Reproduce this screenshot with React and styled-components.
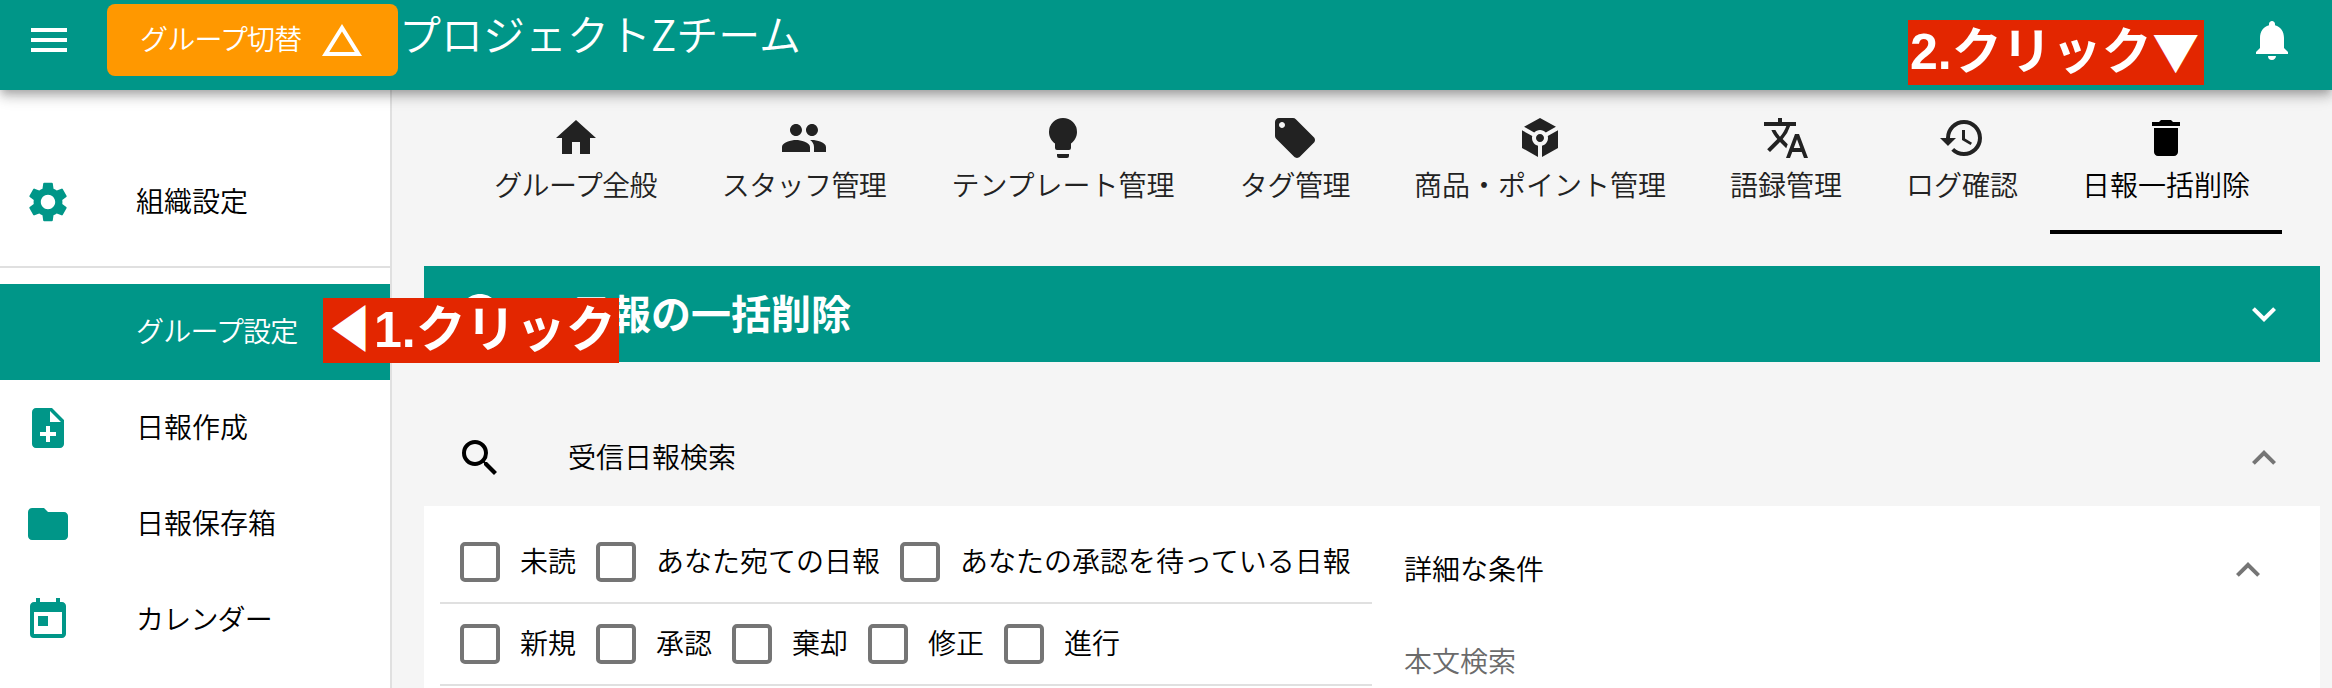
import React from "react";
import styled, { createGlobalStyle } from "styled-components";
import {
  MdMenu,
  MdChangeHistory,
  MdNotifications,
  MdSettings,
  MdNoteAdd,
  MdFolder,
  MdToday,
  MdHome,
  MdToken,
  MdTranslate,
  MdHistory,
  MdDelete,
  MdSearch,
  MdInfo,
  MdExpandLess,
  MdExpandMore,
} from "react-icons/md";

const teal = "#009688";

const GlobalStyle = createGlobalStyle`
  * { box-sizing: border-box; }
  body {
    margin: 0;
    overflow: hidden;
    background: #f5f5f5;
    color: #000;
    font-family: "Noto Sans CJK JP", sans-serif;
    font-size: 28px;
    font-weight: 350;
  }
  svg { display: block; flex: none; }
`;

const Page = styled.div`
  position: relative;
  display: flex;
  flex-direction: column;
  height: 688px;
  overflow: hidden;
`;

const AppBar = styled.header`
  position: relative;
  z-index: 2;
  display: flex;
  align-items: flex-start;
  flex: none;
  height: 90px;
  padding: 0 36px 0 25px;
  background: ${teal};
  color: #fff;
  box-shadow: 0 4px 8px -2px rgba(0, 0, 0, 0.2), 0 8px 10px 0 rgba(0, 0, 0, 0.14),
    0 2px 20px 0 rgba(0, 0, 0, 0.12);
`;

const IconButton = styled.span`
  display: flex;
  margin-top: 16px;
`;

const Label = styled.span`
  padding-bottom: 5px;
  letter-spacing: ${(p) => p.$spacing || 0};
  white-space: nowrap;
`;

const GroupButton = styled.button`
  display: flex;
  align-items: center;
  justify-content: space-between;
  width: 291px;
  height: 72px;
  margin: 4px 0 0 34px;
  padding: 0 32px 0 33px;
  border: 0;
  border-radius: 8px;
  background: #ff9800;
  color: #fff;
  font: inherit;
`;

const Title = styled.h1`
  flex: 1;
  margin: 0 0 0 1px;
  font-size: 42px;
  font-weight: 350;
  line-height: 65px;
`;

const Body = styled.div`
  display: flex;
  flex: 1;
  min-height: 0;
`;

const Sidebar = styled.nav`
  flex: none;
  width: 392px;
  padding-top: 64px;
  border-right: 2px solid #e0e0e0;
  background: #fff;
`;

const NavItem = styled.a`
  display: flex;
  align-items: center;
  height: 96px;
  padding-left: 24px;
  background: ${(p) => (p.$active ? teal : "transparent")};
  color: ${(p) => (p.$active ? "#fff" : "#000")};
`;

const NavIcon = styled.span`
  width: 112px;
  color: ${teal};
`;

const NavDivider = styled.hr`
  height: 2px;
  margin: 16px 0;
  border: 0;
  background: #e0e0e0;
`;

const Main = styled.main`
  flex: 1;
  min-width: 0;
  padding: 0 12px 0 32px;
`;

const Tabs = styled.div`
  display: flex;
  justify-content: center;
  height: 144px;
  margin-bottom: 32px;
  padding-right: 1px;
`;

const Tab = styled.div`
  display: flex;
  flex-direction: column;
  align-items: center;
  width: ${(p) => p.$width}px;
  padding-top: 24px;
  border-bottom: 4px solid ${(p) => (p.$active ? "#000" : "transparent")};
  color: ${(p) => (p.$active ? "#000" : "#222")};
`;

const TabLabel = styled(Label)`
  line-height: 44px;
`;

const PanelHeader = styled.div`
  display: flex;
  align-items: center;
  height: 96px;
  padding: 0 32px;
  background: ${(p) => (p.$filled ? teal : "transparent")};
  color: ${(p) => (p.$filled ? "#fff" : "#000")};
`;

const PanelTitle = styled.h2`
  flex: 1;
  margin: 0;
  padding: 0 0 5px ${(p) => (p.$large ? 67 : 64)}px;
  font-size: ${(p) => (p.$large ? 40 : 28)}px;
  font-weight: ${(p) => (p.$large ? 700 : 350)};
`;

const Chevron = styled.span`
  color: ${(p) => (p.$light ? "#fff" : "#757575")};
`;

const SearchSection = styled.section`
  margin-top: 48px;
`;

const SearchCard = styled.div`
  display: grid;
  grid-template-columns: 932px 932px;
  height: 300px;
  padding: 16px;
  background: #fff;
`;

const CheckRow = styled.div`
  display: flex;
  align-items: center;
  gap: 20px;
  height: 82px;
  padding-left: 20px;
  border-bottom: 2px solid #e0e0e0;
`;

const CheckLabel = styled.label`
  display: flex;
  align-items: center;
  gap: 20px;
`;

const CheckBox = styled.span`
  width: 40px;
  height: 40px;
  border: 4px solid #757575;
  border-radius: 5px;
`;

const Conditions = styled.div`
  padding: 0 32px;
`;

const ConditionsHeader = styled.div`
  display: flex;
  align-items: center;
  justify-content: space-between;
  height: 96px;
`;

const TextField = styled.div`
  display: flex;
  align-items: center;
  height: 88px;
  color: #6b6b6b;
`;

const Callout = styled.div`
  position: absolute;
  z-index: 3;
  left: ${(p) => p.$left}px;
  top: ${(p) => p.$top}px;
  display: flex;
  width: 296px;
  height: 65px;
  padding-left: 2px;
  background: #e32600;
  color: #fff;
  font-family: "Liberation Sans", "Noto Sans CJK JP", sans-serif;
  font-size: 50px;
  font-weight: 700;
  line-height: 65px;
  white-space: nowrap;
`;

const LeftArrow = styled.span`
  width: 49px;
  text-align: center;
  transform: scaleX(0.82);
`;

const DownArrow = styled.span`
  width: 48px;
  font-family: "Noto Sans CJK JP", sans-serif;
  font-size: 47px;
  line-height: 59px;
  text-align: center;
`;

const PeopleIcon = () => (
  <svg width="48" height="48" viewBox="0 0 24 24" fill="currentColor">
    <path d="M16 11c1.66 0 2.99-1.34 2.99-3S17.66 5 16 5c-1.66 0-3 1.34-3 3s1.34 3 3 3zm-8 0c1.66 0 2.99-1.34 2.99-3S9.66 5 8 5C6.34 5 5 6.34 5 8s1.34 3 3 3zm0 2c-2.33 0-7 1.17-7 3.5V19h14v-2.5c0-2.33-4.67-3.5-7-3.5zm8 0c-.29 0-.62.02-.97.05 1.16.84 1.97 1.97 1.97 3.45V19h6v-2.5c0-2.33-4.67-3.5-7-3.5z" />
  </svg>
);

const BulbIcon = () => (
  <svg width="48" height="48" viewBox="0 0 24 24" fill="currentColor">
    <path d="M12 2a7 7 0 0 0-7 7c0 2.38 1.19 4.47 3 5.74V17a1 1 0 0 0 1 1h6a1 1 0 0 0 1-1v-2.26c1.81-1.27 3-3.36 3-5.74a7 7 0 0 0-7-7M9 21a1 1 0 0 0 1 1h4a1 1 0 0 0 1-1v-1H9z" />
  </svg>
);

const TagIcon = () => (
  <svg width="48" height="48" viewBox="0 0 24 24" fill="currentColor">
    <path d="M21.41 11.58l-9-9C12.05 2.22 11.55 2 11 2H4c-1.1 0-2 .9-2 2v7c0 .55.22 1.05.59 1.42l9 9c.36.36.86.58 1.41.58.55 0 1.05-.22 1.41-.59l7-7c.37-.36.59-.86.59-1.41 0-.55-.23-1.06-.59-1.42zM5.5 7C4.67 7 4 6.33 4 5.5S4.67 4 5.5 4 7 4.67 7 5.5 6.33 7 5.5 7z" />
  </svg>
);

const navItems = [
  { label: "グループ設定", active: true, spacing: "-0.8px" },
  { label: "日報作成", icon: MdNoteAdd },
  { label: "日報保存箱", icon: MdFolder },
  { label: "カレンダー", icon: MdToday, spacing: "-0.8px" },
];

const tabs = [
  { label: "グループ全般", icon: MdHome, width: 229, spacing: "-0.6px" },
  { label: "スタッフ管理", icon: PeopleIcon, width: 228, spacing: "-0.6px" },
  { label: "テンプレート管理", icon: BulbIcon, width: 290 },
  { label: "タグ管理", icon: TagIcon, width: 174, spacing: "-0.4px" },
  { label: "商品・ポイント管理", icon: MdToken, width: 316 },
  { label: "語録管理", icon: MdTranslate, width: 176 },
  { label: "ログ確認", icon: MdHistory, width: 176 },
  { label: "日報一括削除", icon: MdDelete, width: 232, active: true },
];

const filters = [
  ["未読", "あなた宛ての日報", "あなたの承認を待っている日報"],
  ["新規", "承認", "棄却", "修正", "進行"],
];

export default function App() {
  return (
    <Page>
      <GlobalStyle />
      <AppBar>
        <IconButton>
          <MdMenu size={48} />
        </IconButton>
        <GroupButton>
          <Label $spacing="-0.8px">グループ切替</Label>
          <MdChangeHistory size={48} />
        </GroupButton>
        <Title>プロジェクトZチーム</Title>
        <IconButton>
          <MdNotifications size={48} />
        </IconButton>
      </AppBar>
      <Body>
        <Sidebar>
          <NavItem>
            <NavIcon>
              <MdSettings size={48} />
            </NavIcon>
            <Label>組織設定</Label>
          </NavItem>
          <NavDivider />
          {navItems.map(({ label, icon: Icon, active, spacing }) => (
            <NavItem key={label} $active={active}>
              <NavIcon>{Icon && <Icon size={48} />}</NavIcon>
              <Label $spacing={spacing}>{label}</Label>
            </NavItem>
          ))}
        </Sidebar>
        <Main>
          <Tabs>
            {tabs.map(({ label, icon: Icon, width, active, spacing }) => (
              <Tab key={label} $width={width} $active={active}>
                <Icon size={48} />
                <TabLabel $spacing={spacing}>{label}</TabLabel>
              </Tab>
            ))}
          </Tabs>
          <PanelHeader $filled>
            <MdInfo size={48} />
            <PanelTitle $large>日報の一括削除</PanelTitle>
            <Chevron $light>
              <MdExpandMore size={48} />
            </Chevron>
          </PanelHeader>
          <SearchSection>
            <PanelHeader>
              <MdSearch size={48} />
              <PanelTitle>受信日報検索</PanelTitle>
              <Chevron>
                <MdExpandLess size={48} />
              </Chevron>
            </PanelHeader>
            <SearchCard>
              <div>
                {filters.map((row) => (
                  <CheckRow key={row[0]}>
                    {row.map((label) => (
                      <CheckLabel key={label}>
                        <CheckBox />
                        <Label>{label}</Label>
                      </CheckLabel>
                    ))}
                  </CheckRow>
                ))}
              </div>
              <Conditions>
                <ConditionsHeader>
                  <Label>詳細な条件</Label>
                  <Chevron>
                    <MdExpandLess size={48} />
                  </Chevron>
                </ConditionsHeader>
                <TextField>
                  <Label>本文検索</Label>
                </TextField>
              </Conditions>
            </SearchCard>
          </SearchSection>
        </Main>
      </Body>
      <Callout $left={323} $top={298}>
        <LeftArrow>◀</LeftArrow>1.クリック
      </Callout>
      <Callout $left={1908} $top={20}>
        2.クリック<DownArrow>▼</DownArrow>
      </Callout>
    </Page>
  );
}
